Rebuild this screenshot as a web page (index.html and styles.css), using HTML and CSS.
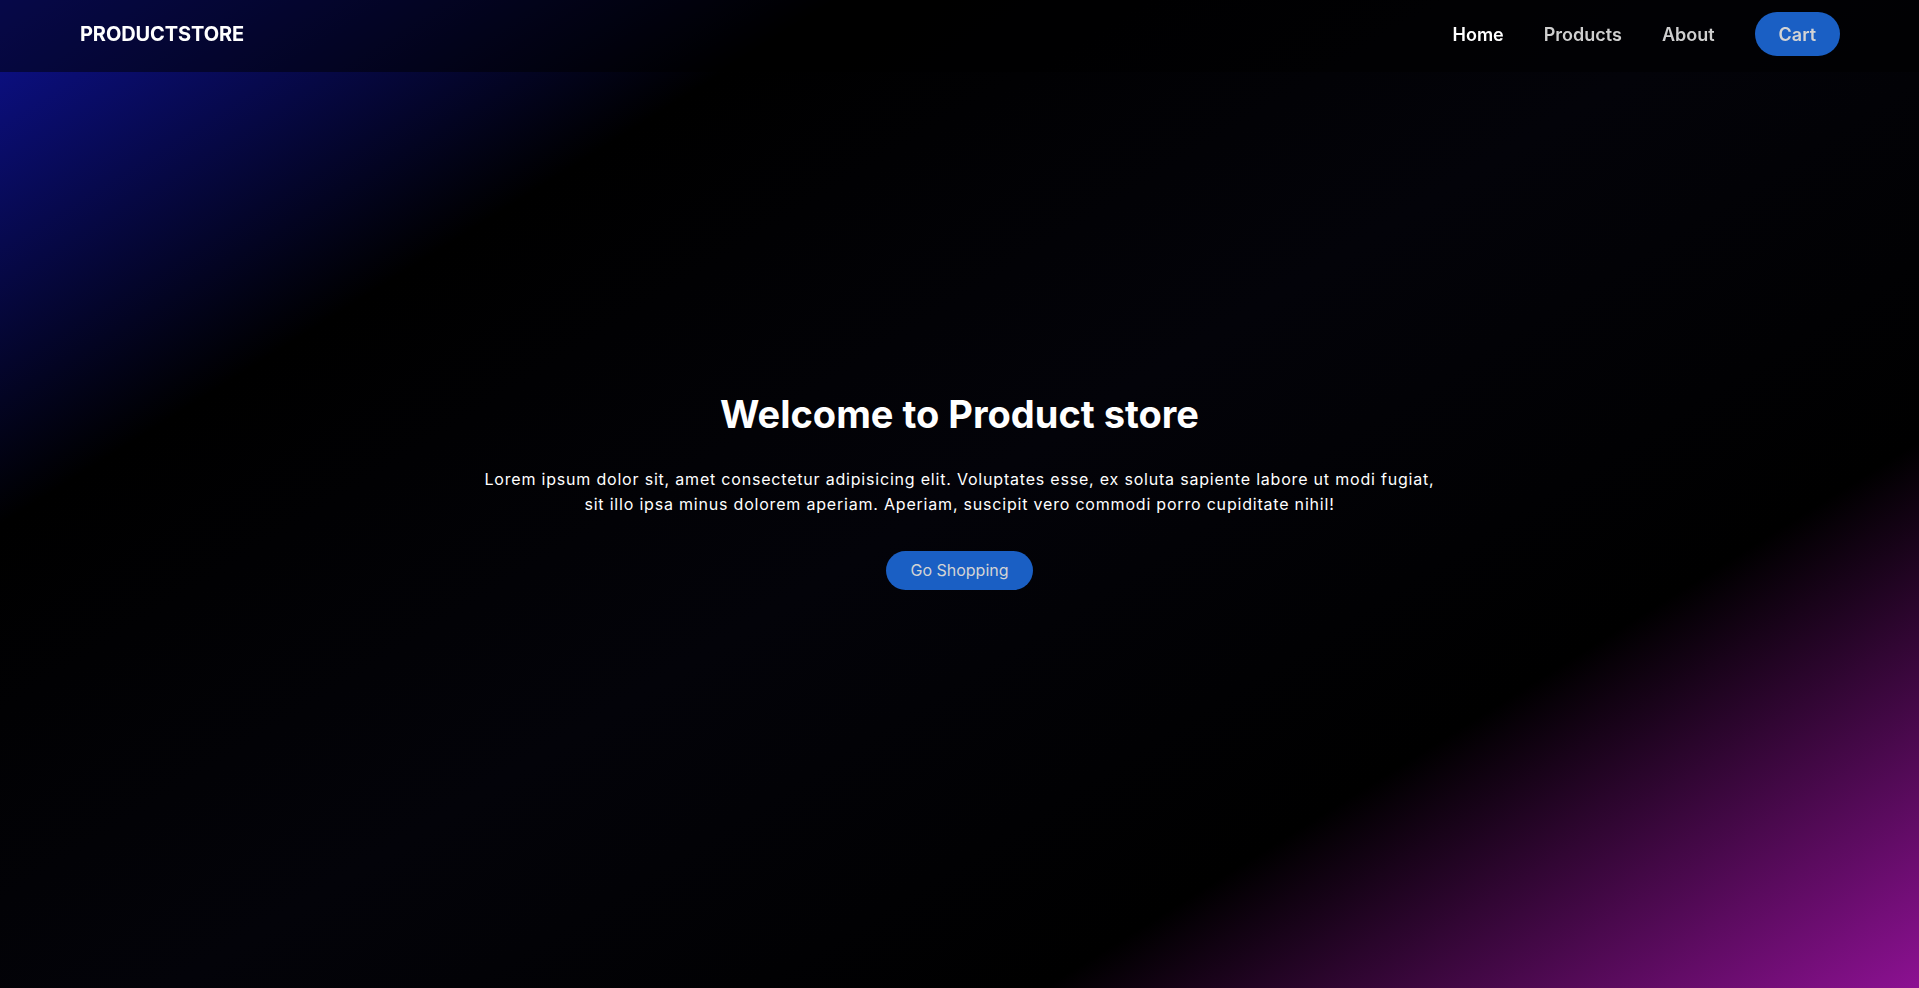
FILE: index.html
```html
<!DOCTYPE html>
<html lang="en">
<head>
<meta charset="utf-8">
<title>ProductStore</title>
<link rel="stylesheet" href="styles.css">
</head>
<body>
<header class="navbar">
  <div class="logo">PRODUCTSTORE</div>
  <nav class="nav-links">
    <a class="nav-link active" href="#">Home</a>
    <a class="nav-link" href="#">Products</a>
    <a class="nav-link" href="#">About</a>
    <a class="cart-btn" href="#">Cart</a>
  </nav>
</header>
<main class="hero">
  <div class="hero-content">
    <h1 class="hero-title">Welcome to Product store</h1>
    <p class="hero-text">Lorem ipsum dolor sit, amet consectetur adipisicing elit. Voluptates esse, ex soluta sapiente labore ut modi fugiat, sit illo ipsa minus dolorem aperiam. Aperiam, suscipit vero commodi porro cupiditate nihil!</p>
    <a class="shop-btn" href="#">Go Shopping</a>
  </div>
</main>
</body>
</html>
```
FILE: styles.css
```css
* { box-sizing: border-box; }
html, body { margin: 0; padding: 0; }
body {
  font-family: Inter, "Noto Sans", sans-serif;
  color: #fff;
  background: #000;
  min-height: 100vh;
}
a { text-decoration: none; }

.navbar {
  position: fixed;
  top: 0;
  left: 0;
  right: 0;
  height: 72px;
  padding: 0 79px 4px 80px;
  display: flex;
  align-items: center;
  justify-content: space-between;
  background: rgba(0, 0, 0, 0.5);
  z-index: 10;
}
.logo {
  font-size: 20px;
  font-weight: 700;
  color: #fff;
  letter-spacing: -0.1px;
}
.nav-links {
  display: flex;
  align-items: center;
  gap: 40px;
}
.nav-link {
  font-size: 18px;
  font-weight: 600;
  color: #cfcfcf;
}
.nav-link.active { color: #fff; }
.cart-btn {
  font-size: 18px;
  font-weight: 600;
  color: #d4d4d4;
  background: #1a5fc4;
  border-radius: 999px;
  height: 44px;
  padding: 0 24px;
  display: flex;
  align-items: center;
}

.hero {
  min-height: 100vh;
  display: flex;
  align-items: center;
  justify-content: center;
  text-align: center;
  background: linear-gradient(148deg,
    #0d1192 0%,
    #000 24%,
    #030309 50%,
    #000 75%,
    #8c1192 100%);
}
.hero-content {
  max-width: 960px;
  display: flex;
  flex-direction: column;
  align-items: center;
  padding-bottom: 6px;
}
.hero-title {
  margin: 0 0 29px;
  font-size: 38px;
  font-weight: 700;
  line-height: 1.2;
}
.hero-text {
  margin: 0 0 33px;
  font-size: 16px;
  line-height: 25.6px;
  letter-spacing: 0.8px;
  color: #fff;
}
.shop-btn {
  font-size: 16px;
  color: #d4d4d4;
  background: #1a5fc4;
  border-radius: 999px;
  padding: 10px 24px;
  line-height: 19px;
}
```
